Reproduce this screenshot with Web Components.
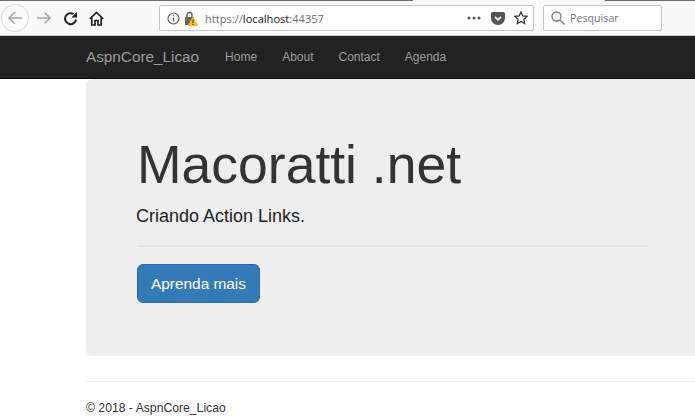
<!DOCTYPE html>
<html>
<head>
<meta charset="utf-8">
<style>
html, body { margin: 0; padding: 0; background: #fff; }
body { width: 695px; height: 420px; overflow: hidden; font-family: "Liberation Sans", Arial, sans-serif; }
</style>
</head>
<body>
<browser-bar></browser-bar>
<site-nav brand="AspnCore_Licao">
    <a href="#">Home</a>
    <a href="#">About</a>
    <a href="#">Contact</a>
    <a href="#">Agenda</a>
</site-nav>
<site-jumbo title="Macoratti .net" lead="Criando Action Links." action="Aprenda mais"></site-jumbo>
<site-footer>© 2018 - AspnCore_Licao</site-footer>

<script>
// custom element BrowserBar
class BrowserBar extends HTMLElement {
    constructor() {
        super();
        this.attachShadow({ mode: 'open' });
        this.shadowRoot.innerHTML = `
            <style>
            :host {
                display: flex;
                align-items: center;
                box-sizing: border-box;
                height: 36px;
                padding-top: 1px;
                background: #f9f9fa linear-gradient(90deg, #6d6d6d 413px, #f9f9fa 413px, #f9f9fa 605px, #6d6d6d 605px) top / 100% 1px no-repeat;
                border-bottom: 1px solid #c8c8c8;
            }
            .back {
                box-sizing: border-box;
                width: 28px;
                height: 28px;
                margin-left: 1px;
                border: 1px solid #d8d8d8;
                border-radius: 50%;
                background: #fbfbfb;
                display: flex;
                align-items: center;
                justify-content: center;
            }
            .forward { margin-left: 7px; }
            .reload { margin-left: 11px; }
            .home { margin-left: 11px; }
            svg { display: block; flex: none; }
            .url {
                box-sizing: border-box;
                display: flex;
                align-items: center;
                width: 375px;
                height: 26px;
                margin-left: 55px;
                background: #fff;
                border: 1px solid #c4c4c4;
                border-radius: 2px;
                font: 11.1px "Open Sans", sans-serif;
                color: #6f6f6f;
            }
            .url .text { margin-left: 7px; flex: 1; white-space: nowrap; }
            .url b { font-weight: normal; color: #111; }
            .search {
                box-sizing: border-box;
                display: flex;
                align-items: center;
                width: 119px;
                height: 26px;
                margin-left: 9px;
                background: #fff;
                border: 1px solid #c4c4c4;
                border-radius: 2px;
                font: 10.7px "Open Sans", sans-serif;
                color: #75757f;
            }
            .search span { margin-left: 5px; }
            </style>
            <div class="back">
                <svg width="18" height="18" viewBox="0 0 18 18" fill="none" stroke="#a6a6a6" stroke-width="1.6"><path d="M16 9H3M9 3L3 9l6 6"/></svg>
            </div>
            <svg class="forward" width="16" height="16" viewBox="0 0 16 16" fill="none" stroke="#a6a6a6" stroke-width="1.6"><path d="M1 8h13M8.500 2.500L14 8l-5.500 5.500"/></svg>
            <svg class="reload" width="15" height="15" viewBox="0 0 15 15" fill="none" stroke="#222" stroke-width="2"><path d="M13 8.500A5.500 5.500 0 1 1 10.500 3"/><path d="M14 .8v5.700H8.300z" fill="#222" stroke="none"/></svg>
            <svg class="home" width="15" height="15" viewBox="0 0 15 15" fill="none" stroke="#222" stroke-width="1.700"><path d="M.8 7.800L7.500 1.400l6.700 6.400"/><path d="M2.800 6.500V14h3.200V9.500h3V14h3.200V6.500"/></svg>
            <div class="url">
                <svg style="margin-left:7px" width="13" height="13" viewBox="0 0 13 13" fill="none" stroke="#555" stroke-width="1.100"><circle cx="6.500" cy="6.500" r="5.500"/><path d="M6.500 5.500v4M6.500 3v1.300"/></svg>
                <svg style="margin-left:4px" width="14" height="15" viewBox="0 0 14 15"><path d="M3 6V4a2.500 2.500 0 0 1 5 0v2" fill="none" stroke="#666" stroke-width="1.500"/><path d="M1 6h9v8H1z" fill="#666"/><path d="M9 5.500l5.500 9.500H3.500z" fill="#fbbc1c"/><path d="M9 8.500v3.500M9 12.800v1.200" stroke="#333" stroke-width="1"/></svg>
                <span class="text">https://<b>localhost</b>:44357</span>
                <svg width="14" height="4" viewBox="0 0 14 4" fill="#555"><circle cx="2" cy="2" r="1.500"/><circle cx="7" cy="2" r="1.500"/><circle cx="12" cy="2" r="1.500"/></svg>
                <svg style="margin-left:10px" width="14" height="13" viewBox="0 0 14 13"><path d="M1.500 0h11A1.500 1.500 0 0 1 14 1.500V6a7 7 0 0 1-14 0V1.500A1.500 1.500 0 0 1 1.500 0z" fill="#555"/><path d="M4 4.800l3 3 3-3" fill="none" stroke="#fff" stroke-width="1.800"/></svg>
                <svg style="margin:0 5px 0 9px" width="14" height="14" viewBox="0 0 14 14" fill="none" stroke="#333" stroke-width="1.300"><path d="M7 1l1.800 3.900 4.200.5-3.100 2.900.8 4.200L7 10.400 3.300 12.500l.8-4.200L1 5.400l4.200-.5z"/></svg>
            </div>
            <div class="search">
                <svg style="margin-left:7px" width="14" height="14" viewBox="0 0 14 14" fill="none" stroke="#777" stroke-width="1.300"><circle cx="5.500" cy="5.500" r="4.500"/><path d="M9 9l4.500 4.500"/></svg>
                <span>Pesquisar</span>
            </div>
        `;
    }
}

// custom element SiteNav
class SiteNav extends HTMLElement {
    constructor() {
        super();
        this.attachShadow({ mode: 'open' });
        this.shadowRoot.innerHTML = `
            <style>
            :host {
                display: flex;
                align-items: center;
                box-sizing: border-box;
                height: 43px;
                padding-left: 86px;
                background: #222;
                border-bottom: 1px solid #080808;
            }
            .brand {
                font-size: 15.3px;
                color: #9d9d9d;
                margin-right: 26px;
            }
            .links { display: flex; gap: 25px; }
            ::slotted(a) {
                font-size: 12px;
                color: #9d9d9d;
                text-decoration: none;
            }
            </style>
            <span class="brand"></span>
            <div class="links"><slot></slot></div>
        `;
        this.shadowRoot.querySelector(".brand").textContent = this.getAttribute("brand");
    }
}

// custom element SiteJumbo
class SiteJumbo extends HTMLElement {
    constructor() {
        super();
        this.attachShadow({ mode: 'open' });
        this.shadowRoot.innerHTML = `
            <style>
            :host {
                display: block;
                box-sizing: border-box;
                width: 640px;
                height: 277px;
                margin-left: 86px;
                padding: 48px 0 0 51px;
                background: #eee;
                border-radius: 6px;
                color: #333;
            }
            h1 {
                margin: 0;
                font-size: 53.5px;
                font-weight: 500;
                line-height: 76px;
            }
            p {
                margin: 0;
                font-size: 18px;
                line-height: 26px;
                color: #222;
                margin-left: -1px;
            }
            hr {
                width: 511px;
                height: 2px;
                margin: 16px 0 17px;
                border: 0;
                background: #e2e2e2;
            }
            button {
                display: block;
                box-sizing: border-box;
                width: 123px;
                height: 39px;
                padding: 0;
                background: #337ab7;
                border: 1px solid #2e6da4;
                border-radius: 6px;
                color: #fff;
                font: 15.4px "Liberation Sans", Arial, sans-serif;
            }
            </style>
            <h1></h1>
            <p></p>
            <hr>
            <button type="button"></button>
        `;
        this.shadowRoot.querySelector("h1").textContent = this.getAttribute("title");
        this.shadowRoot.querySelector("p").textContent = this.getAttribute("lead");
        this.shadowRoot.querySelector("button").textContent = this.getAttribute("action");
    }
}

// custom element SiteFooter
class SiteFooter extends HTMLElement {
    constructor() {
        super();
        this.attachShadow({ mode: 'open' });
        this.shadowRoot.innerHTML = `
            <style>
            :host {
                display: block;
                box-sizing: border-box;
                margin: 25px 0 0 86px;
                padding-top: 18px;
                border-top: 1px solid #eee;
                font-size: 12.2px;
                line-height: 17px;
                color: #333;
            }
            </style>
            <slot></slot>
        `;
    }
}

customElements.define("browser-bar", BrowserBar);
customElements.define("site-nav", SiteNav);
customElements.define("site-jumbo", SiteJumbo);
customElements.define("site-footer", SiteFooter);
</script>
</body>
</html>
